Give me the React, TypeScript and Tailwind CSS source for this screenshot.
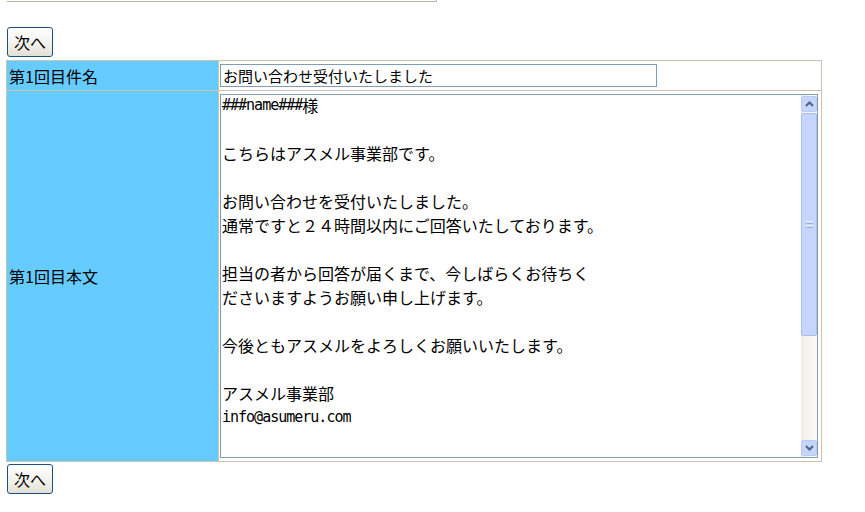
import React from "react";

const jp = { fontFamily: '"Noto Sans CJK JP", "Liberation Sans", sans-serif' };
const mono = {
  fontFamily: '"DejaVu Sans Mono", monospace',
  fontSize: "15px",
  letterSpacing: "-1px",
};

function XPButton({ label }: { label: string }) {
  return (
    <button
      className="flex h-[30px] w-[46px] items-center justify-center rounded-[3px] border border-[#1c4f80] bg-gradient-to-b from-[#ffffff] via-[#f4f3ee] to-[#e3e1d6] text-[16px] leading-none text-black"
      style={jp}
    >
      {label}
    </button>
  );
}

function Chevron({ up }: { up: boolean }) {
  return (
    <svg width="9" height="6" viewBox="0 0 9 6">
      <path
        d={up ? "M1 5 L4.5 1.5 L8 5" : "M1 1 L4.5 4.5 L8 1"}
        fill="none"
        stroke="#4d6185"
        strokeWidth="2"
      />
    </svg>
  );
}

function Scrollbar() {
  return (
    <div className="flex h-full w-[16px] flex-col bg-gradient-to-r from-[#eeede5] to-[#fbfbf8]">
      <div className="mt-[1px] flex h-[16px] w-[16px] items-center justify-center rounded-[2px] border border-[#b7cbf5] bg-[#c6d6fb]">
        <Chevron up />
      </div>
      <div className="mt-[1px] flex h-[223px] w-[16px] items-center justify-center rounded-[2px] border border-[#a9bef0] bg-[#c6d5fc]">
        <div className="flex flex-col gap-[1px]">
          <div className="h-[1px] w-[7px] bg-[#eef3ff]" />
          <div className="h-[1px] w-[7px] bg-[#9bb0e6]" />
          <div className="h-[1px] w-[7px] bg-[#eef3ff]" />
          <div className="h-[1px] w-[7px] bg-[#9bb0e6]" />
        </div>
      </div>
      <div className="flex-1" />
      <div className="mb-[1px] flex h-[16px] w-[16px] items-center justify-center rounded-[2px] border border-[#b7cbf5] bg-[#c6d6fb]">
        <Chevron up={false} />
      </div>
    </div>
  );
}

const bodyLines: string[] = [
  "",
  "",
  "こちらはアスメル事業部です。",
  "",
  "お問い合わせを受付いたしました。",
  "通常ですと２４時間以内にご回答いたしております。",
  "",
  "担当の者から回答が届くまで、今しばらくお待ちく",
  "ださいますようお願い申し上げます。",
  "",
  "今後ともアスメルをよろしくお願いいたします。",
  "",
  "アスメル事業部",
  "",
];

export default function App() {
  return (
    <div className="h-[512px] w-[865px] bg-white text-black" style={jp}>
      <div className="ml-[7px] h-[2px] w-[430px] border-b border-r border-[#bcb5a3]" />
      <div className="ml-[7px] mt-[25px]">
        <XPButton label="次へ" />
      </div>
      <div className="ml-[6px] mt-[3px] w-[816px] border border-[#cbc4b0] bg-[#cbc4b0]">
        <div className="grid grid-cols-[211px_1fr] gap-[1px]">
          <div className="flex h-[29px] items-center bg-[#66ccff] pl-[2px] text-[16px] leading-none">
            第1回目件名
          </div>
          <div className="h-[29px] bg-white pl-[1px] pt-[3px]">
            <div className="flex h-[23px] w-[437px] items-center border border-[#7f9db9] bg-white pl-[2px] text-[15px] leading-none">
              お問い合わせ受付いたしました
            </div>
          </div>
          <div className="flex h-[370px] items-center bg-[#66ccff] pl-[2px] text-[16px] leading-none">
            第1回目本文
          </div>
          <div className="h-[370px] bg-white pl-[1px] pt-[3px]">
            <div className="flex h-[364px] w-[598px] border border-[#7f9db9] bg-white">
              <div className="-mt-[2px] flex-1 overflow-hidden pl-[1px] text-[16px] leading-[24px]">
                {bodyLines.map((l, i) => (
                  <div key={i} className="flex h-[24px] items-center whitespace-pre">
                    {i === 0 ? (
                      <>
                        <span style={mono}>###name###</span>
                        <span>様</span>
                      </>
                    ) : i === 13 ? (
                      <span style={mono}>info@asumeru.com</span>
                    ) : (
                      l
                    )}
                  </div>
                ))}
              </div>
              <Scrollbar />
            </div>
          </div>
        </div>
      </div>
      <div className="ml-[7px] mt-[2px]">
        <XPButton label="次へ" />
      </div>
    </div>
  );
}
